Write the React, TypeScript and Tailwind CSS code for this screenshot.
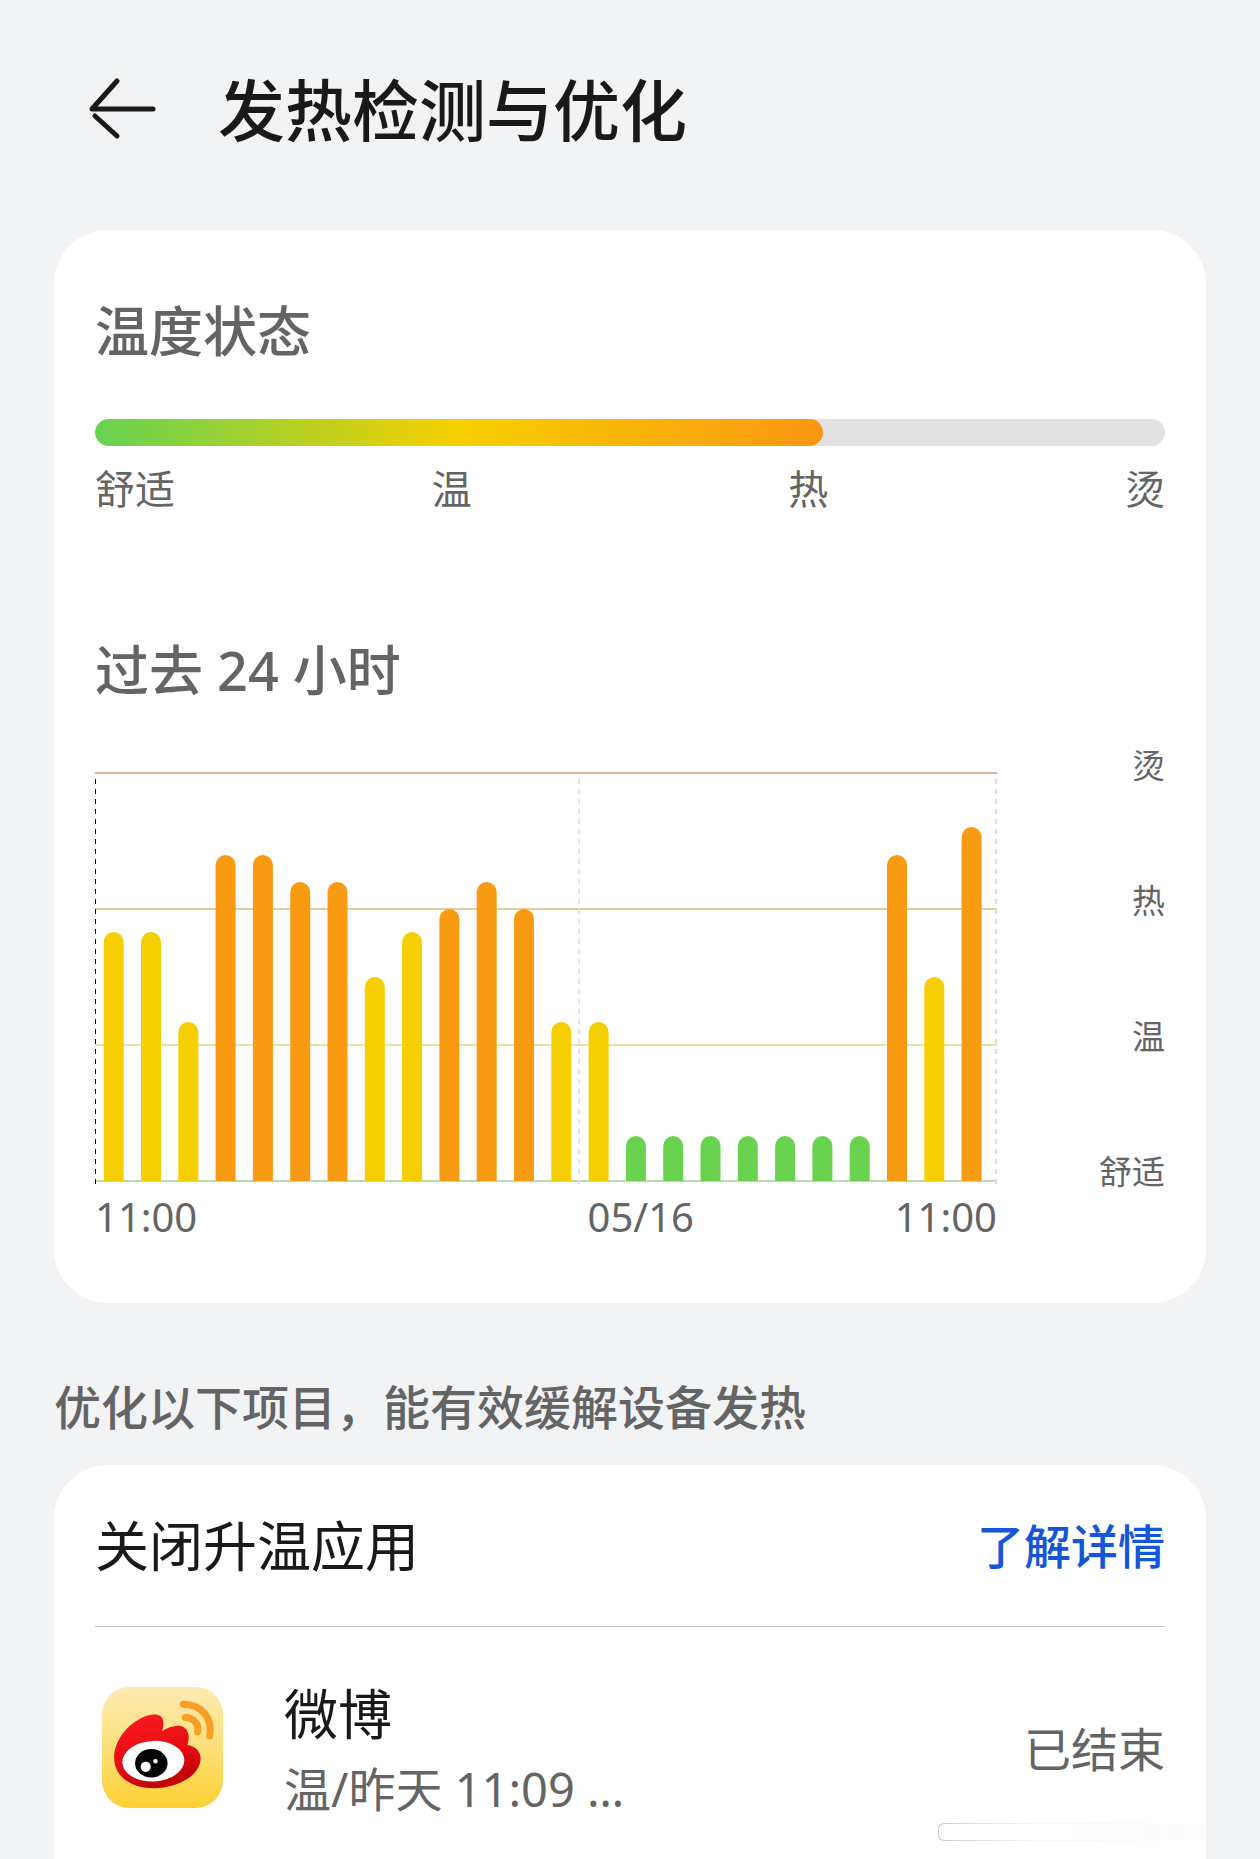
type Level = 'cool' | 'warm' | 'hot'

const hours: { value: number; level: Level }[] = [
  { value: 249, level: 'warm' },
  { value: 249, level: 'warm' },
  { value: 159, level: 'warm' },
  { value: 326, level: 'hot' },
  { value: 326, level: 'hot' },
  { value: 299, level: 'hot' },
  { value: 299, level: 'hot' },
  { value: 204, level: 'warm' },
  { value: 249, level: 'warm' },
  { value: 272, level: 'hot' },
  { value: 299, level: 'hot' },
  { value: 272, level: 'hot' },
  { value: 159, level: 'warm' },
  { value: 159, level: 'warm' },
  { value: 45, level: 'cool' },
  { value: 45, level: 'cool' },
  { value: 45, level: 'cool' },
  { value: 45, level: 'cool' },
  { value: 45, level: 'cool' },
  { value: 45, level: 'cool' },
  { value: 45, level: 'cool' },
  { value: 326, level: 'hot' },
  { value: 204, level: 'warm' },
  { value: 354, level: 'hot' },
]

const barFill: Record<Level, string> = {
  cool: 'fill-[#69d350]',
  warm: 'fill-[#f6cf02]',
  hot: 'fill-[#f89b12]',
}

const gridLines = [
  { y: 1, className: 'stroke-[#dcae9c]' },
  { y: 137, className: 'stroke-[#e4cd9a]' },
  { y: 273, className: 'stroke-[#ebe39f]' },
  { y: 409, className: 'stroke-[#b9dcb0]' },
]

function BackIcon() {
  return (
    <svg className="w-[70px] h-16" viewBox="0 0 70 64" fill="none" stroke="currentColor" strokeWidth="5" strokeLinecap="round" strokeLinejoin="round" aria-hidden="true">
      <path d="M65 31H4L29 3" />
      <path d="M7 38L29 58" />
    </svg>
  )
}

function WeiboIcon() {
  return (
    <svg className="w-[121px] h-[121px] flex-none" viewBox="0 0 119 119" aria-hidden="true">
      <defs>
        <linearGradient id="weibo-bg" x1="0" y1="0" x2="0" y2="1">
          <stop offset="0" stopColor="#fdeab3" />
          <stop offset="0.5" stopColor="#fce07a" />
          <stop offset="1" stopColor="#fdd031" />
        </linearGradient>
        <linearGradient id="weibo-body" x1="0" y1="0" x2="0.3" y2="1">
          <stop offset="0" stopColor="#fb1c22" />
          <stop offset="0.6" stopColor="#e80d14" />
          <stop offset="1" stopColor="#c20509" />
        </linearGradient>
      </defs>
      <rect width="119" height="119" rx="27" fill="url(#weibo-bg)" />
      <path
        d="M12 71C11 54 25 36 41 29.500C47 27 54 26 58 29C61 32 61 38 59 43.500C66 39 76 36 81 40C86 44 86 50 84 57C91 58 97 63 97 70C97 87 74 99.500 51 99.500C28 99.500 13 88 12 71Z"
        fill="url(#weibo-body)"
      />
      <ellipse cx="50.5" cy="73" rx="30.5" ry="20" fill="#fff" transform="rotate(-3 50 73)" />
      <ellipse cx="48.5" cy="75" rx="16" ry="14" fill="#050505" />
      <circle cx="43" cy="78.5" r="5" fill="#fff" />
      <circle cx="52.5" cy="73" r="2.2" fill="#fff" />
      <g fill="none" stroke="#f79f26" strokeWidth="7" strokeLinecap="round">
        <path d="M80 17C98 17 109 31 106 48" />
        <path d="M82 30C90 30 96 37 94 44" />
      </g>
    </svg>
  )
}

function HistoryChart() {
  return (
    <svg className="block w-full h-auto" viewBox="0 0 902 420" role="img" aria-label="过去 24 小时">
      {gridLines.map((line) => (
        <line key={line.y} x1="0" x2="902" y1={line.y} y2={line.y} strokeWidth="2" className={line.className} />
      ))}
      <line x1="484" x2="484" y1="7" y2="412" stroke="#e2e2e2" strokeWidth="2" strokeDasharray="5 5" />
      <line x1="901" x2="901" y1="7" y2="412" stroke="#dcdcdc" strokeWidth="2" strokeDasharray="5 5" />
      {hours.map((hour, i) => {
        const x = 8.7 + i * 37.3
        const top = 409 - hour.value
        return (
          <path
            key={i}
            d={`M${x} 409V${top + 10}a10 10 0 0 1 20 0V409Z`}
            className={barFill[hour.level]}
          />
        )
      })}
      <line x1="0.5" x2="0.5" y1="7" y2="412" stroke="#000" strokeDasharray="5 5" />
    </svg>
  )
}

export default function App() {
  return (
    <main className="relative flex min-h-screen flex-col overflow-hidden bg-[#f1f3f5] px-[54px] font-['Noto_Sans','Noto_Sans_CJK_SC',sans-serif] text-[#646464]">
      {/* Title bar */}
      <header className="flex items-center gap-[60px] pt-[65px] pb-[75px] pl-[34px] text-[#191919]">
        <button type="button" aria-label="返回">
          <BackIcon />
        </button>
        <h1 className="text-[67px] leading-[90px] font-medium">发热检测与优化</h1>
      </header>

      {/* Temperature card */}
      <section className="rounded-[54px] bg-white px-[41px] pt-[65px] pb-[62px]">
        <h2 className="text-[54px] leading-[72px] font-medium">温度状态</h2>
        <div className="mt-[52px] h-[27px] overflow-hidden rounded-full bg-[#e2e2e2]">
          <div className="h-full w-[68%] rounded-full bg-linear-to-r/srgb from-[#66d352] via-[#f7cf00] to-[#fb9713]"></div>
        </div>
        <div className="mt-[19px] grid grid-cols-6 text-[40px] leading-[48px]">
          <span>舒适</span>
          <span className="col-span-2 text-center">温</span>
          <span className="col-span-2 text-center">热</span>
          <span className="text-right">烫</span>
        </div>

        <h2 className="mt-[121px] text-[54px] leading-[72px] font-medium">过去 24 小时</h2>
        <div className="mt-10 flex">
          <div className="flex-1 pt-[26px]">
            <HistoryChart />
          </div>
          <div className="flex w-[168px] flex-none flex-col justify-between text-right text-[33px] leading-10">
            <span>烫</span>
            <span>热</span>
            <span>温</span>
            <span>舒适</span>
          </div>
        </div>
        <div className="mt-px mr-[168px] grid grid-cols-[13fr_11fr] text-[40px] leading-[48px]">
          <span>11:00</span>
          <div className="flex justify-between pl-1">
            <span>05/16</span>
            <span>11:00</span>
          </div>
        </div>
      </section>

      <p className="mt-[72px] text-[47px] leading-[64px] font-medium">优化以下项目，能有效缓解设备发热</p>

      {/* Heating apps */}
      <section className="mt-[26px] flex-1 rounded-t-[54px] bg-white px-[41px]">
        <div className="flex h-[162px] items-center justify-between border-b border-[#c8c8c8]">
          <h2 className="text-[54px] leading-[72px] text-[#191919]">关闭升温应用</h2>
          <a href="#details" className="text-[47px] leading-[64px] font-medium text-[#1456d8]">
            了解详情
          </a>
        </div>
        <div className="flex items-center pt-[45px] pb-8 pl-[7px]">
          <WeiboIcon />
          <div className="ml-[61px] flex-1">
            <h3 className="text-[54px] leading-[84px] text-[#191919]">微博</h3>
            <p className="text-[47px] leading-[66px]">温/昨天 11:09 …</p>
          </div>
          <span className="pt-1 text-[47px] leading-[64px]">已结束</span>
        </div>
      </section>

      {/* Faded strip over the lower corner */}
      <div className="absolute right-0 bottom-[18px] h-[18px] w-[322px] rounded-l-md bg-linear-to-r from-[#cccccc] via-[#f3f3f3]/60 via-30% to-transparent py-px pl-px" aria-hidden="true">
        <div className="h-full rounded-l-md bg-linear-to-r from-white from-40% to-white/0 to-80%"></div>
      </div>
    </main>
  )
}
